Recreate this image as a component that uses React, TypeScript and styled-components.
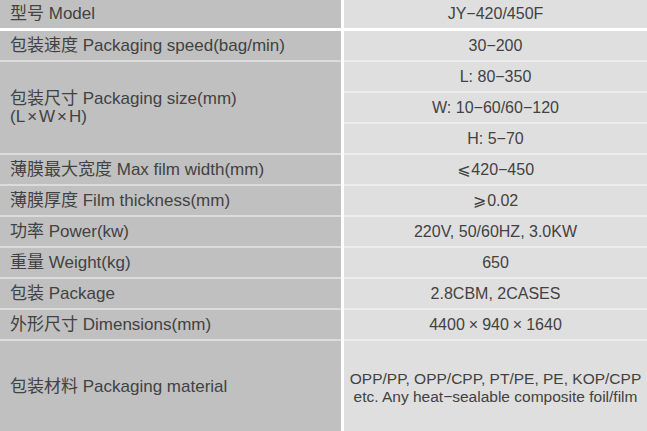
import React from 'react'
import styled, { createGlobalStyle } from 'styled-components'

const GlobalStyle = createGlobalStyle`
    html, body {
        margin: 0;
        padding: 0;
        background: #ffffff;
    }
    body {
        font-family: "Liberation Sans", Arial, "Noto Sans CJK SC", "DejaVu Sans", sans-serif;
        color: #424242;
    }
`

type Sep = 'none' | 'white' | 'line'

const borderFor = (sep: Sep, line: string) => {
    if (sep === 'white') return '3px solid #ffffff'
    if (sep === 'line') return `2px solid ${line}`
    return 'none'
}

const StyledSheet = styled.div`
    width: 647px;
    display: flex;
    flex-direction: column;
    background: #ffffff;
`

const StyledRow = styled.div`
    display: grid;
    grid-template-columns: 341px 303px;
    column-gap: 3px;
`

const StyledLabel = styled.div<{ $sep: Sep }>`
    display: flex;
    flex-direction: column;
    justify-content: center;
    padding-left: 10px;
    background: #c0c0c0;
    border-top: ${p => borderFor(p.$sep, '#dcdcdc')};
    font-size: 17px;
    line-height: 18px;
`

const StyledValueStack = styled.div`
    display: flex;
    flex-direction: column;
`

const StyledValue = styled.div<{ $sep: Sep; $h: number; $small?: boolean }>`
    display: flex;
    align-items: center;
    justify-content: center;
    height: ${p => p.$h}px;
    background: #dfdfdf;
    border-top: ${p => borderFor(p.$sep, '#ededed')};
    text-align: center;
    font-size: ${p => (p.$small ? '15.5px' : '16px')};
    line-height: 18px;
    padding-top: ${p => (p.$small ? '3px' : '0')};
    box-sizing: content-box;
    white-space: nowrap;
`

const StyledLines = styled.div`
    display: flex;
    flex-direction: column;
    align-items: center;
`

const StyledTimes = styled.span<{ $space: number }>`
    margin: 0 ${p => p.$space}px;
`

const StyledMath = styled.span`
    font-family: "DejaVu Sans", "Noto Sans CJK SC", sans-serif;
    font-size: 16px;
    margin-right: 1px;
`

interface ISpec {
    label: React.ReactNode
    values: React.ReactNode[]
    height?: number
    small?: boolean
}

const specs: ISpec[] = [
    { label: '型号 Model', values: ['JY−420/450F'], height: 28 },
    { label: '包装速度 Packaging speed(bag/min)', values: ['30−200'] },
    {
        label: (
            <>
                <span>包装尺寸 Packaging size(mm)</span>
                <span>(L<StyledTimes $space={2}>×</StyledTimes>W<StyledTimes $space={2}>×</StyledTimes>H)</span>
            </>
        ),
        values: ['L: 80−350', 'W: 10−60/60−120', 'H: 5−70']
    },
    { label: '薄膜最大宽度 Max film width(mm)', values: [<span><StyledMath>⩽</StyledMath>420−450</span>] },
    { label: '薄膜厚度 Film thickness(mm)', values: [<span><StyledMath>⩾</StyledMath>0.02</span>] },
    { label: '功率 Power(kw)', values: ['220V, 50/60HZ, 3.0KW'] },
    { label: '重量 Weight(kg)', values: ['650'] },
    { label: '包装 Package', values: ['2.8CBM, 2CASES'] },
    {
        label: '外形尺寸 Dimensions(mm)',
        values: [<span>4400<StyledTimes $space={4}>×</StyledTimes>940<StyledTimes $space={4}>×</StyledTimes>1640</span>]
    },
    {
        label: '包装材料 Packaging material',
        values: [
            <StyledLines>
                <span>OPP/PP, OPP/CPP, PT/PE, PE, KOP/CPP</span>
                <span>etc. Any heat−sealable composite foil/film</span>
            </StyledLines>
        ],
        height: 88,
        small: true
    }
]

const App = () => {
    return (
        <>
            <GlobalStyle />
            <StyledSheet>
                {specs.map((spec, rowIndex) => {
                    const sep: Sep = rowIndex === 0 ? 'none' : rowIndex === 1 ? 'white' : 'line'
                    return (
                        <StyledRow key={rowIndex}>
                            <StyledLabel $sep={sep}>{spec.label}</StyledLabel>
                            <StyledValueStack>
                                {spec.values.map((value, valueIndex) => (
                                    <StyledValue
                                        key={valueIndex}
                                        $sep={valueIndex === 0 ? sep : 'line'}
                                        $h={spec.height ?? 29}
                                        $small={spec.small}
                                    >
                                        {value}
                                    </StyledValue>
                                ))}
                            </StyledValueStack>
                        </StyledRow>
                    )
                })}
            </StyledSheet>
        </>
    )
}

export default App
